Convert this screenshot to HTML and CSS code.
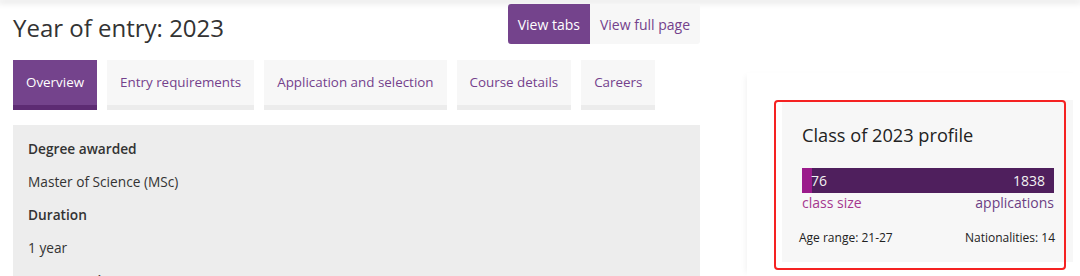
FILE: index.html
```html
<!DOCTYPE html>
<html lang="en">
<head>
    <meta charset="UTF-8">
    <meta name="viewport" content="width=device-width, initial-scale=1.0">
    <title>Year of entry: 2023</title>
    <link rel="stylesheet" href="styles.css">
</head>
<body>
    <div class="topbar"></div>
    <div class="page">
        <div class="main">
            <div class="title-row">
                <h1>Year of entry: 2023</h1>
                <div class="view-switch">
                    <a class="view-btn active">View tabs</a>
                    <a class="view-btn">View full page</a>
                </div>
            </div>

            <ul class="tabs">
                <li class="tab active">Overview</li>
                <li class="tab">Entry requirements</li>
                <li class="tab">Application and selection</li>
                <li class="tab">Course details</li>
                <li class="tab">Careers</li>
            </ul>

            <div class="panel">
                <p class="label">Degree awarded</p>
                <p>Master of Science (MSc)</p>
                <p class="label">Duration</p>
                <p>1 year</p>
                <p class="label">Entry requirements</p>
            </div>
        </div>

        <div class="side">
            <div class="profile">
                <h3>Class of 2023 profile</h3>
                <div class="bar">
                    <div class="bar-fill" style="width: 4%"></div>
                    <span class="num">76</span>
                    <span class="num">1838</span>
                </div>
                <div class="bar-labels">
                    <span class="lbl-class">class size</span>
                    <span class="lbl-apps">applications</span>
                </div>
                <div class="facts">
                    <span>Age range: 21-27</span>
                    <span>Nationalities: 14</span>
                </div>
            </div>
            <div class="highlight"></div>
        </div>
    </div>
</body>
</html>
```

FILE: styles.css
```css
html, body {
    height: 100%;
    overflow: hidden;
}
body {
    margin: 0;
    font-family: "Open Sans", "Liberation Sans", sans-serif;
    color: #333;
    background: #fff;
}
.topbar {
    height: 0;
    box-shadow: 0 1px 6px 2px rgba(0, 0, 0, 0.12);
}
.page {
    display: flex;
    padding-left: 13px;
}
.main {
    width: 687px;
    flex: none;
}
.title-row {
    display: flex;
    justify-content: space-between;
    align-items: flex-start;
}
h1 {
    margin: 0;
    padding-top: 11px;
    font-size: 24px;
    line-height: 33px;
    font-weight: 400;
    color: #333;
}
.view-switch {
    display: flex;
    margin-top: 4px;
}
.view-btn {
    display: flex;
    align-items: center;
    height: 40px;
    padding: 0 10px;
    font-size: 14px;
    color: #74418c;
    background: #f7f7f7;
    border-radius: 0 3px 3px 0;
}
.view-btn.active {
    color: #fff;
    background: #74438c;
    border-radius: 3px 0 0 3px;
}
.tabs {
    display: flex;
    gap: 10px;
    margin: 16px 0 0;
    padding: 0;
    list-style: none;
}
.tab {
    height: 45px;
    line-height: 45px;
    padding: 0 13px;
    font-size: 13.4px;
    color: #74418c;
    background: #f7f7f7;
    border-bottom: 5px solid #ececec;
}
.tab.active {
    color: #fff;
    background: #74438c;
    border-bottom-color: #5d2b73;
}
.panel {
    margin-top: 15px;
    padding: 14px 15px 0;
    background: #ededed;
    height: 137px;
    overflow: hidden;
}
.panel p {
    margin: 0 0 13px;
    font-size: 13.7px;
    line-height: 20px;
}
.panel .label {
    font-weight: 600;
}
.side {
    position: relative;
    flex: 1;
    margin: 73px 0 0 47px;
    padding: 27px 7px 0 35px;
    height: 176px;
    box-shadow: -4px 0 6px -3px rgba(0, 0, 0, 0.06);
}
.profile {
    background: #f7f7f7;
    padding: 23px 19px 15px 20px;
}
.profile h3 {
    margin: 0 0 20px;
    font-size: 18.2px;
    line-height: 25px;
    font-weight: 400;
    color: #222;
}
.bar {
    position: relative;
    display: flex;
    justify-content: space-between;
    height: 25px;
    line-height: 25px;
    padding: 0 9px;
    background: #4f1f5d;
    font-size: 14px;
    color: #f2f2f2;
}
.bar-fill {
    position: absolute;
    left: 0;
    top: 0;
    bottom: 0;
    background: #9b1b8b;
}
.num {
    position: relative;
}
.bar-labels {
    display: flex;
    justify-content: space-between;
    font-size: 14px;
    line-height: 20px;
}
.lbl-class {
    color: #a5388f;
}
.lbl-apps {
    color: #6c3f84;
}
.facts {
    display: flex;
    justify-content: space-between;
    margin: 16px -1px 0 -3px;
    font-size: 12px;
    line-height: 18px;
    color: #222;
}
.highlight {
    position: absolute;
    left: 27px;
    top: 27px;
    width: 288px;
    height: 166px;
    border: 2px solid #f52222;
    border-radius: 4px;
}
```
